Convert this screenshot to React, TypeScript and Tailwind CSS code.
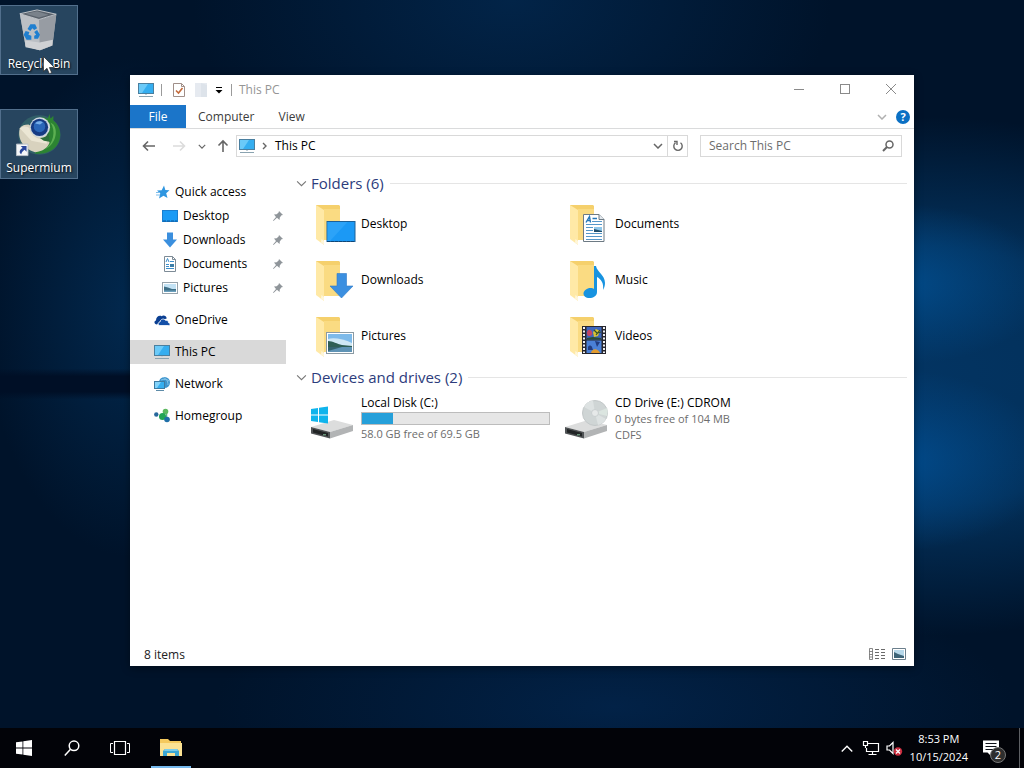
import { useState } from "react";
import type { ReactNode } from "react";

type IconProps = { className?: string };

function PcIcon({ className = "size-4" }: IconProps) {
  return (
    <svg viewBox="0 0 16 16" className={className} aria-hidden="true">
      <rect x="0.5" y="1.5" width="15" height="10" fill="#35aef0" stroke="#4a7f9f" />
      <path d="M1 2h9L4 11H1z" fill="#6bcaf8" />
      <path d="M7 12h2v1H7z" fill="#c3d2da" />
      <path d="M1 14.5h14" stroke="#8aa3b0" />
    </svg>
  );
}

function StarIcon() {
  return (
    <svg viewBox="0 0 16 16" className="size-4" aria-hidden="true">
      <path d="M10 1.500l1.300 4.500 4.200.2-3.300 3 1.300 4.800L9.500 11.800 5 14.500l1.300-5L3 6.500l4.700-.3z" fill="#2f96e0" />
      <path d="M2 8.500h4M2 11h4" stroke="#7cbdec" />
    </svg>
  );
}

function DesktopIcon() {
  return (
    <svg viewBox="0 0 16 16" className="size-4" aria-hidden="true">
      <rect x="0.500" y="2.500" width="15" height="11" fill="#1b9bf5" stroke="#1a7fd0" />
      <path d="M1 13h14" stroke="#0d5a9c" strokeDasharray="3 1" />
    </svg>
  );
}

function DownloadIcon() {
  return (
    <svg viewBox="0 0 16 16" className="size-4" aria-hidden="true">
      <path d="M5 0.500h6v7h4l-7 8-7-8h4z" fill="#3b8fde" />
    </svg>
  );
}

function DocumentIcon() {
  return (
    <svg viewBox="0 0 16 16" className="size-4" aria-hidden="true">
      <path d="M2.500 0.500h8l3 3v12h-11z" fill="#fff" stroke="#7d8b96" />
      <path d="M10.500 0.500v3h3" fill="none" stroke="#7d8b96" />
      <path d="M4 6l1.500-3.500L7 6M8 5.500h4M4 8.500h3M4 10.500h3M4 12.500h8" fill="none" stroke="#3d8fcb" />
      <path d="M8 8h4v3H8z" fill="#3b7ea8" />
    </svg>
  );
}

function PictureIcon() {
  return (
    <svg viewBox="0 0 16 16" className="size-4" aria-hidden="true">
      <rect x="0.500" y="2.500" width="15" height="11" fill="#fff" stroke="#97a3ab" />
      <path d="M2 4h12v8H2z" fill="#c3e2f4" />
      <path d="M2 6.500l4 1 4 1.500h4v3H2z" fill="#3f6f86" />
      <path d="M2 10.500h12V12H2z" fill="#6ba0bd" />
    </svg>
  );
}

function OneDriveIcon() {
  return (
    <svg viewBox="0 0 16 16" className="size-4" aria-hidden="true">
      <path d="M3 12.500C0 12.500-.4 9 2 8.400 2 5 5 3 7.600 4.200 9.500 2.500 12.600 4 12.700 6.500L8 8z" fill="#0b3f92" />
      <path d="M6 13.500C3.500 13.500 3.600 10 6 10c.3-3 4-4 5.600-1.600 2-.6 3 1 2.900 2.300 2.200.4 1.900 2.800 0 2.800z" fill="#1450a8" stroke="#fff" strokeWidth="0.800" />
    </svg>
  );
}

function NetworkIcon() {
  return (
    <svg viewBox="0 0 16 16" className="size-4" aria-hidden="true">
      <circle cx="10.500" cy="6.500" r="5.500" fill="#3d94cd" />
      <path d="M9 1.500c3 1 5 3 5 7.500M7 4c3-1 6-1 8 1" fill="none" stroke="#85c5ea" />
      <rect x="0.500" y="5.500" width="10" height="7" fill="#35aef0" stroke="#3d7ba2" />
      <path d="M1 6h6l-4 6H1z" fill="#83d3fa" />
      <path d="M2 14.500h8" stroke="#5d8ba8" />
    </svg>
  );
}

function HomegroupIcon() {
  return (
    <svg viewBox="0 0 16 16" className="size-4" aria-hidden="true">
      <path d="M8 8l4-4.500M8 8l5 3.500M12.500 4v7" stroke="#5fae86" strokeWidth="1.500" />
      <circle cx="2.300" cy="6.500" r="2.200" fill="#28679c" />
      <circle cx="11.500" cy="3.500" r="2.800" fill="#5cb85f" />
      <circle cx="8.500" cy="8.500" r="3.500" fill="#23a455" />
      <circle cx="13" cy="11.500" r="2.800" fill="#1f6fa8" />
    </svg>
  );
}

function PinIcon() {
  return (
    <svg viewBox="0 0 12 12" className="size-3" aria-hidden="true">
      <path d="M7 1l4 4-1.500.3L7.800 7.400 7.500 10 5 7.800 1.500 11 1 10.500 4 7 2 4.600l2.700-.3L6.600 2.500z" fill="#8f959a" />
    </svg>
  );
}

function FolderBase({ children }: { children: ReactNode }) {
  return (
    <svg viewBox="-4 0 48 48" className="size-12 shrink-0" aria-hidden="true">
      <path d="M4 5h23l1 1v34H11L4 38z" fill="#f5d06c" />
      <path d="M12 9h16v31H12z" fill="#fadb82" />
      <path d="M4 5l8 5v35l-8-6z" fill="#ffe9a6" />
      <path d="M9.500 39l2.500 2v4l-3-2.500z" fill="#fff6da" />
      {children}
    </svg>
  );
}

function FolderDesktop() {
  return (
    <FolderBase>
      <rect x="15" y="21.500" width="28" height="20" fill="#1b99f5" stroke="#1d6097" />
      <path d="M15.500 22h20L18 41h-2.500z" fill="#2ca3f8" />
      <path d="M15 41.500h28" stroke="#0e4677" strokeDasharray="3 1" />
    </FolderBase>
  );
}

function FolderDownloads() {
  return (
    <FolderBase>
      <path d="M25 17.500h9.500V30H41L29.500 42 18 30h7z" fill="#3b8fe0" stroke="#2f7ac8" strokeWidth="0.600" />
    </FolderBase>
  );
}

function FolderPictures() {
  return (
    <FolderBase>
      <rect x="14.500" y="20.500" width="27" height="21" fill="#fff" stroke="#8b9aa3" />
      <path d="M16 22h24v18H16z" fill="#7dbaea" />
      <path d="M16 27c5-2 16 0 24 4v3H16z" fill="#cfe7f5" />
      <path d="M16 29c5 0 9 3 14 4l10 1v1H16z" fill="#2f5e55" />
      <path d="M16 35h24v5H16z" fill="#5f93b5" />
      <path d="M16 35h14l-14 4z" fill="#35626e" />
    </FolderBase>
  );
}

function FolderDocuments() {
  return (
    <FolderBase>
      <path d="M17.500 14.500H33l5 5V41.500H17.500z" fill="#fff" stroke="#6d7a84" />
      <path d="M33 14.500v5h5" fill="#e3e9ee" stroke="#6d7a84" />
      <path d="M20 22.500l3.500-6 1 6M21 20.500h3M26.500 18.500H31" fill="none" stroke="#2577b9" strokeWidth="1.400" />
      <path d="M26 21.500h10M20 24.500h16M20 27.500h7M20 30.500h7M20 33.500h16M20 36.500h16M20 39.500h16" stroke="#5597c9" />
      <path d="M28 27h8v5h-8z" fill="#8fc7ea" />
      <path d="M28 29l4 1 4 1v1h-8z" fill="#1f4d6b" />
    </FolderBase>
  );
}

function FolderMusic() {
  return (
    <FolderBase>
      <path d="M28 10h2c1 6 9 9 9 17 0 3-1 5-2 7 1-7-2-11-6-13v15c0 4-4 6-7.500 6-3.800 0-6-2-6-4.500 0-3 3.500-5.500 7-5.500 1.500 0 2.700.4 3.500 1z" fill="#1793e0" />
    </FolderBase>
  );
}

function FolderVideos() {
  return (
    <FolderBase>
      <path d="M16 14h24v28H16z" fill="#26262e" />
      <path d="M18 15v26M38 15v26" stroke="#f1f1f4" strokeWidth="2" strokeDasharray="2 1.500" />
      <path d="M20.500 15h15v12.500h-15z" fill="#3d66bd" />
      <path d="M20.500 28.500h15V41h-15z" fill="#4a80d6" />
      <path d="M21 20c1-3 4-3 5 0s-1 4-3 4-2-2-2-4z" fill="#c24566" />
      <path d="M27 20l3-3 4 2-2 5-4 1z" fill="#d8c233" />
      <path d="M28 18l3 3 4-1M30 23l4-5" fill="none" stroke="#30502a" strokeWidth="1.200" />
      <path d="M21 26l6-1 8 1v1.500H21z" fill="#294d35" />
      <path d="M22 35c1-2 3-2 4 0l1 3h-5zM29 29l5 1-3 5z" fill="#223c80" />
      <path d="M25 41c1-5 7-5 9 0z" fill="#e29b30" />
    </FolderBase>
  );
}

function DriveBody() {
  return (
    <>
      <path d="M-1 32l23-7 19 5-23 7z" fill="#dcdddd" />
      <path d="M18 37l23-7v6l-23 7.500z" fill="#b2b4b5" />
      <path d="M-1 32l19 5v6.500L-1 38.500z" fill="#505355" />
      <path d="M1 34l15 4v3.500L1 37.500z" fill="#212425" />
      <path d="M11 39.800h3" stroke="#86c29a" />
    </>
  );
}

function LocalDiskIcon() {
  return (
    <svg viewBox="-4 0 48 48" className="size-12 shrink-0" aria-hidden="true">
      <DriveBody />
      <path d="M-1 14l7-1v6.500h-7zM7 12.800l9-1.300v8H7zM-1 20.500h7V27l-7-1zM7 20.500h9v8l-9-1.300z" fill="#10b4ec" />
    </svg>
  );
}

function CdDriveIcon() {
  return (
    <svg viewBox="-4 0 48 48" className="size-12 shrink-0" aria-hidden="true">
      <DriveBody />
      <circle cx="29" cy="18" r="12.500" fill="#cfd5d5" stroke="#c3c8c9" />
      <path d="M29 18L18 12a12.500 12.500 0 0 1 9-6.400zM29 18l11 6a12.500 12.500 0 0 1-8 6z" fill="#dde2e2" />
      <path d="M29 18L41 13a12.500 12.500 0 0 1 0 8z" fill="#dbe5e0" />
      <circle cx="29" cy="18" r="3.500" fill="#e6e9e9" stroke="#c9cfd0" />
    </svg>
  );
}

function RecycleBinIcon() {
  return (
    <svg viewBox="0 0 48 48" className="size-12" aria-hidden="true">
      <path d="M4 6l6 34 15 4 13-5 4-32-18 6z" fill="#a9aeb4" />
      <path d="M4 6l20 6 1 32-15-4z" fill="#bbbfc4" />
      <path d="M24 12l18-5-4 32-13 5z" fill="#979ca3" />
      <path d="M9.500 34l15 2 14-3-.8 6L25 44l-15-3z" fill="#cfd1d4" />
      <path d="M4 6l18-4 20 4.500L24 12z" fill="#59616b" stroke="#c3c7cb" />
      <path d="M10 6l12-2.500L34 7l-10 3z" fill="#7a828b" />
      <path d="M12 22l3-5h5l2 4-3 2-2-2-2 3zM22 23l3 5-2 4h-4v-3l2-1-2-3zM16 33h-5l-3-5 2-4 4 1-1 3 3 1z" fill="#1f7fd0" />
    </svg>
  );
}

function SupermiumIcon() {
  return (
    <svg viewBox="0 0 48 48" className="size-12" aria-hidden="true">
      <ellipse cx="24.500" cy="24" rx="22" ry="20.500" fill="#315f68" />
      <path d="M27 5l6 2 2-5 1 5 3-3v5c11 8 9 26-4 32-6 3-12 3-16 2 11-6 15-15 13-24z" fill="#2c8432" />
      <path d="M36 11c6 9 3 22-6 28 10-4 15-18 9-26z" fill="#5db052" />
      <path d="M4 17c-3 11 4 22 16 25 8-1 13-5 15-10l-3-8L13 13c-4 0-7 1-9 4z" fill="#d8d2be" />
      <path d="M4 17c4-3 8-2 10 0 1 5 4 9 10 11l9 1-1 4-16-3z" fill="#ebe6d4" />
      <path d="M34 20c-1 5-4 7-9 7l4 3 6 1z" fill="#2c6f39" />
      <circle cx="25" cy="16" r="10.500" fill="#cfd8df" />
      <circle cx="24.500" cy="16" r="9" fill="#173b83" />
      <circle cx="24.500" cy="15" r="6" fill="#2a66b8" />
      <path d="M20 12c2-3 6-3 8-1l-3 2z" fill="#77aee8" />
      <path d="M0.500 33.500h12v12h-12z" fill="#f4f6f8" stroke="#b8c0c8" />
      <path d="M5 35.500h6v6l-2-2C7 41 6 42 5.500 44 2.500 42 4 39 7 37.500z" fill="#28459b" />
    </svg>
  );
}

const chevronDown = "M1 1l4 4 4-4";

function Chevron({ className = "", d = chevronDown }: IconProps & { d?: string }) {
  return (
    <svg viewBox="0 0 10 6" className={className} fill="none" stroke="currentColor" aria-hidden="true">
      <path d={d} />
    </svg>
  );
}

const NAV_ITEMS = [
  { label: "Quick access", icon: <StarIcon /> },
  { label: "Desktop", icon: <DesktopIcon />, pinned: true },
  { label: "Downloads", icon: <DownloadIcon />, pinned: true },
  { label: "Documents", icon: <DocumentIcon />, pinned: true },
  { label: "Pictures", icon: <PictureIcon />, pinned: true },
  { label: "OneDrive", icon: <OneDriveIcon />, root: true },
  { label: "This PC", icon: <PcIcon />, root: true },
  { label: "Network", icon: <NetworkIcon />, root: true },
  { label: "Homegroup", icon: <HomegroupIcon />, root: true },
];

const FOLDERS = [
  { label: "Desktop", icon: <FolderDesktop /> },
  { label: "Documents", icon: <FolderDocuments /> },
  { label: "Downloads", icon: <FolderDownloads /> },
  { label: "Music", icon: <FolderMusic /> },
  { label: "Pictures", icon: <FolderPictures /> },
  { label: "Videos", icon: <FolderVideos /> },
];

const DISK = { totalGb: 69.5, freeGb: 58 };

function TitleBar() {
  return (
    <header className="flex h-[30px] items-center pl-2">
      <PcIcon className="size-4" />
      <span className="ml-[7px] h-3 w-px bg-[#9a9a9a]" />
      <button type="button" aria-label="Properties" className="ml-[10px]">
        <svg viewBox="0 0 14 16" className="h-4 w-[14px]" aria-hidden="true">
          <path d="M1.500 1.500h8l3 3v10h-11z" fill="#fff" stroke="#a08f89" />
          <path d="M9.500 1.500v3h3" fill="none" stroke="#a08f89" />
          <path d="M4 8.500l2.500 2.500L10.500 6" fill="none" stroke="#c46a3a" strokeWidth="1.600" />
        </svg>
      </button>
      <button type="button" aria-label="New folder" className="ml-2">
        <svg viewBox="0 0 14 16" className="h-4 w-[14px]" aria-hidden="true">
          <path d="M1 1h12v14H1z" fill="#e6eaf0" />
          <path d="M7 1l6 2v12H7z" fill="#dde3ea" />
        </svg>
      </button>
      <button type="button" aria-label="Customize Quick Access Toolbar" className="ml-[7px]">
        <svg viewBox="0 0 8 8" className="size-2" aria-hidden="true">
          <path d="M1 1.500h6" stroke="#000" />
          <path d="M0.500 4h7L4 7.500z" fill="#000" />
        </svg>
      </button>
      <span className="ml-2 h-3 w-px bg-[#9a9a9a]" />
      <h1 className="ml-[7px] text-[#959595]">This PC</h1>
      <div className="ml-auto flex h-full pb-[2px] text-[#8a8a8a]">
        <button type="button" aria-label="Minimize" className="grid w-[46px] place-items-center">
          <span className="h-px w-[10px] bg-current" />
        </button>
        <button type="button" aria-label="Maximize" className="grid w-[46px] place-items-center">
          <span className="size-[10px] border border-current" />
        </button>
        <button type="button" aria-label="Close" className="grid w-[46px] place-items-center">
          <svg viewBox="0 0 10 10" className="size-[10px]" stroke="currentColor" aria-hidden="true">
            <path d="M0 0l10 10M10 0L0 10" />
          </svg>
        </button>
      </div>
    </header>
  );
}

function Ribbon() {
  return (
    <div className="flex h-6 border-b border-[#dadbdc] text-[#3c3c3c]">
      <button type="button" className="w-14 bg-[#1b75c9] text-white">
        File
      </button>
      <button type="button" className="px-3">
        Computer
      </button>
      <button type="button" className="px-3">
        View
      </button>
      <button type="button" aria-label="Expand the Ribbon" className="ml-auto px-[9px]">
        <Chevron className="h-[6px] w-[10px] stroke-[1.5] text-[#b0b0b0]" />
      </button>
      <button type="button" aria-label="Help" className="mr-1 self-center">
        <span className="grid size-[14px] place-items-center rounded-full bg-[#0b70c4] text-[11px] leading-[14px] font-bold text-white">
          ?
        </span>
      </button>
    </div>
  );
}

function AddressBar() {
  return (
    <div className="flex h-[34px] items-center px-3 text-[#666]">
      <button type="button" aria-label="Back">
        <svg viewBox="0 0 14 12" className="h-3 w-[14px]" fill="none" stroke="currentColor" strokeWidth="1.600" aria-hidden="true">
          <path d="M13 6H1.500M6 1.500L1.500 6 6 10.500" />
        </svg>
      </button>
      <button type="button" aria-label="Forward" className="ml-4 text-[#dcdcdc]">
        <svg viewBox="0 0 14 12" className="h-3 w-[14px]" fill="none" stroke="currentColor" strokeWidth="1.600" aria-hidden="true">
          <path d="M1 6h11.500M8 1.500L12.500 6 8 10.500" />
        </svg>
      </button>
      <button type="button" aria-label="Recent locations" className="ml-3">
        <Chevron className="h-[5px] w-2 stroke-[1.5]" />
      </button>
      <button type="button" aria-label="Up" className="mr-[7px] ml-[11px]">
        <svg viewBox="0 0 12 14" className="h-[14px] w-3" fill="none" stroke="currentColor" strokeWidth="1.600" aria-hidden="true">
          <path d="M6 13V2M1.500 6.500L6 2l4.500 4.500" />
        </svg>
      </button>
      <div className="flex h-[22px] min-w-0 flex-1 items-center border border-[#d9d9d9] pl-[2px]">
        <PcIcon className="size-4" />
        <svg viewBox="0 0 6 8" className="mx-[7px] h-2 w-[6px]" fill="none" stroke="currentColor" strokeWidth="1.400" aria-hidden="true">
          <path d="M1 1l3 3-3 3" />
        </svg>
        <a href="#this-pc" className="text-black">
          This PC
        </a>
        <button type="button" aria-label="Previous locations" className="ml-auto px-1">
          <Chevron className="h-[6px] w-[10px] stroke-[1.5]" />
        </button>
        <button
          type="button"
          aria-label="Refresh"
          className="grid h-full w-5 place-items-center border-l border-[#d9d9d9]"
        >
          <svg viewBox="0 0 12 12" className="size-3" fill="none" stroke="currentColor" strokeWidth="1.400" aria-hidden="true">
            <path d="M3.500 2.800A4.200 4.200 0 1 0 8.500 2.800M2 1.500h3v3.500" />
          </svg>
        </button>
      </div>
      <label className="ml-3 flex h-[22px] w-[202px] items-center border border-[#d9d9d9] px-[7px]">
        <input
          type="search"
          aria-label="Search This PC"
          placeholder="Search This PC"
          className="min-w-0 flex-1 pl-px outline-none placeholder:text-[#6d6d6d]"
        />
        <svg viewBox="0 0 12 12" className="size-3" fill="none" stroke="currentColor" strokeWidth="1.500" aria-hidden="true">
          <circle cx="7.500" cy="4.500" r="3.500" />
          <path d="M5 7L1 11" strokeWidth="2" />
        </svg>
      </label>
    </div>
  );
}

function NavPane({ current, onSelect }: { current: string; onSelect: (label: string) => void }) {
  return (
    <nav aria-label="Navigation pane" className="w-[156px] shrink-0 pt-[17px]">
      <ul>
        {NAV_ITEMS.map((item) => (
          <li key={item.label} className={item.root ? "mt-2" : ""}>
            <button
              type="button"
              onClick={() => onSelect(item.label)}
              className={`flex h-6 w-full items-center gap-[5px] pr-[2px] ${item.pinned ? "pl-8" : "pl-6"} ${
                current === item.label ? "bg-[#d9d9d9]" : ""
              }`}
            >
              {item.icon}
              <span className="flex-1 text-left">{item.label}</span>
              {item.pinned ? <PinIcon /> : null}
            </button>
          </li>
        ))}
      </ul>
    </nav>
  );
}

function Group({ title, children }: { title: string; children: ReactNode }) {
  return (
    <section>
      <h2 className="flex h-[26px] items-center text-[15px] text-[#2c3c7c]">
        <button type="button" className="flex items-center gap-1">
          <Chevron className="h-[7px] w-[11px] text-[#777]" />
          {title}
        </button>
        <span className="ml-[6px] h-px flex-1 bg-[#e5e5e5]" />
      </h2>
      <ul className="grid grid-cols-[repeat(auto-fill,254px)] pl-3">{children}</ul>
    </section>
  );
}

function FileView() {
  const used = ((DISK.totalGb - DISK.freeGb) / DISK.totalGb) * 100;

  return (
    <main className="ml-[10px] min-w-0 flex-1 pt-[7px] pr-[7px]">
      <Group title="Folders (6)">
        {FOLDERS.map((folder) => (
          <li key={folder.label} className="flex h-14 items-center gap-[5px]">
            {folder.icon}
            <span>{folder.label}</span>
          </li>
        ))}
      </Group>
      <Group title="Devices and drives (2)">
        <li className="flex items-start gap-[5px] py-[5px]">
          <LocalDiskIcon />
          <div className="min-w-0 flex-1 pr-3">
            <p>Local Disk (C:)</p>
            <div
              role="progressbar"
              aria-label="Used space"
              aria-valuenow={Math.round(used)}
              className="mt-px h-[13px] border border-[#bcbcbc] bg-[#e6e6e6]"
            >
              <div className="h-full bg-[#26a0da]" style={{ width: `${used}%` }} />
            </div>
            <p className="mt-px text-[11px] text-[#6d6d6d]">58.0 GB free of 69.5 GB</p>
          </div>
        </li>
        <li className="flex items-start gap-[5px] py-[5px]">
          <CdDriveIcon />
          <div className="whitespace-nowrap">
            <p>CD Drive (E:) CDROM</p>
            <p className="text-[11px] text-[#6d6d6d]">0 bytes free of 104 MB</p>
            <p className="text-[11px] text-[#6d6d6d]">CDFS</p>
          </div>
        </li>
      </Group>
    </main>
  );
}

function StatusBar() {
  return (
    <footer className="flex h-6 items-center gap-[5px] pr-[7px] pl-[14px] text-[#222]">
      <span className="mr-auto pt-px">8 items</span>
      <button type="button" aria-label="Details view">
        <svg viewBox="0 0 18 14" className="h-[14px] w-[18px]" fill="none" stroke="#6b6b6b" aria-hidden="true">
          <path d="M1.500 1.500h3v11h-3zM1.500 4.500h3M1.500 7.500h3M1.500 10h3" strokeWidth="0.800" />
          <path d="M7 2.500h4M13 2.500h4M7 5.500h4M13 5.500h4M7 8.500h4M13 8.500h4M7 11.500h4M13 11.500h4" />
        </svg>
      </button>
      <button type="button" aria-label="Large icons view">
        <svg viewBox="0 0 16 14" className="h-[14px] w-4" aria-hidden="true">
          <path d="M1.500 1.500h13v11h-13z" fill="#fff" stroke="#6b7f8c" />
          <path d="M3 3h10v8H3z" fill="#b6d8ea" />
          <path d="M3 5l4 2 6 2v2H3z" fill="#3d6478" />
        </svg>
      </button>
    </footer>
  );
}

function DesktopShortcut({ label, icon }: { label: string; icon: ReactNode }) {
  return (
    <button
      type="button"
      className="flex h-[70px] w-[78px] flex-col items-center border border-[#526f8c] bg-[#27455f] pt-[2px] text-white"
    >
      {icon}
      <span className="leading-5 [text-shadow:1px_1px_2px_#000]">{label}</span>
    </button>
  );
}

function Taskbar() {
  return (
    <footer className="flex h-10 shrink-0 items-stretch bg-[#020308] text-white">
      <button type="button" aria-label="Start" className="grid w-12 place-items-center">
        <svg viewBox="0 0 16 16" className="size-4" fill="#fff" aria-hidden="true">
          <path d="M0 2.300l6.500-.9v6.200H0zM7.300 1.300L16 0v7.600H7.300zM0 8.400h6.500v6.200L0 13.700zM7.300 8.400H16V16l-8.700-1.300z" />
        </svg>
      </button>
      <button type="button" aria-label="Search" className="grid w-12 place-items-center">
        <svg viewBox="0 0 16 16" className="size-4" fill="none" stroke="#fff" strokeWidth="1.500" aria-hidden="true">
          <circle cx="10" cy="5.800" r="4.800" />
          <path d="M6.500 9.300L0.800 15.500" />
        </svg>
      </button>
      <button type="button" aria-label="Task View" className="grid w-12 place-items-center">
        <svg viewBox="0 0 20 16" className="h-4 w-5" fill="none" stroke="#fff" aria-hidden="true">
          <path d="M4.500 1.500h11v13h-11z" strokeWidth="1.200" />
          <path d="M3 3.500H0.500v9H3M17 3.500h2.500v9H17" />
        </svg>
      </button>
      <button
        type="button"
        aria-label="File Explorer"
        className="ml-[7px] grid w-10 place-items-center border-b-2 border-[#76b9ed] pt-[2px]"
      >
        <svg viewBox="0 0 22 18" className="h-[18px] w-[22px]" aria-hidden="true">
          <path d="M0 0h8l2 2h11v15H0z" fill="#f4c95d" />
          <path d="M0 4h22v13H0z" fill="#fbe293" />
          <path d="M3 17v-5l2-2h12l2 2v5h-4v-3H7v3z" fill="#3ba7d4" />
          <path d="M5 10h12l1 2H4z" fill="#7accea" />
        </svg>
      </button>
      <div className="ml-auto flex items-center">
        <button type="button" aria-label="Show hidden icons">
          <Chevron className="h-[7px] w-3 stroke-[1.2]" d="M0.500 5.500L5 1l4.500 4.500" />
        </button>
        <button type="button" aria-label="Network" className="ml-[9px]">
          <svg viewBox="0 0 18 16" className="h-4 w-[18px]" fill="none" stroke="#fff" strokeWidth="1.200" aria-hidden="true">
            <path d="M6 3.500h10.500v8H4.500V8M10.500 11.500v3M6.500 14.500h8" />
            <path d="M1.500 1.500h4v4h-4zM3.500 5.500v2.500" />
          </svg>
        </button>
        <button type="button" aria-label="Volume muted" className="ml-[6px]">
          <svg viewBox="0 0 17 16" className="h-4 w-[17px]" fill="none" aria-hidden="true">
            <path d="M1 6h2.500L7 2.500v11L3.500 10H1z" stroke="#fff" strokeWidth="1.200" />
            <circle cx="12" cy="11.500" r="4.200" fill="#cb2c3e" />
            <path d="M10 9.500l4 4M14 9.500l-4 4" stroke="#fff" strokeWidth="1.300" />
          </svg>
        </button>
        <time dateTime="2024-10-15T20:53" className="ml-[7px] text-center text-[11px] leading-[18px]">
          8:53 PM
          <br />
          10/15/2024
        </time>
        <button type="button" aria-label="Notifications, 2 new" className="relative mr-[14px] ml-[15px]">
          <svg viewBox="0 0 16 17" className="h-[17px] w-4" aria-hidden="true">
            <path d="M0 0.500h16v12H8.500v4l-4-4H0z" fill="#fff" />
            <path d="M2.500 3.500h11M2.500 6.500h11M2.500 9.500h8" stroke="#10131a" />
          </svg>
          <span className="absolute top-[7px] left-[7px] grid size-4 place-items-center rounded-full border border-[#777] bg-[#2e2e2e] text-[11px] leading-3">
            2
          </span>
        </button>
      </div>
      <span className="mr-1 ml-[6px] w-px bg-[#5d5f63]" />
    </footer>
  );
}

export default function App() {
  const [current, setCurrent] = useState("This PC");

  return (
    <div className="flex h-screen flex-col overflow-hidden bg-[#00132a] bg-[radial-gradient(ellipse_150px_80px_at_88%_37%,#024a88_0%,transparent_100%),radial-gradient(ellipse_150px_90px_at_88%_60%,#024a8a_0%,transparent_100%),radial-gradient(ellipse_420px_260px_at_90%_49%,#033462_0%,#03305a_50%,transparent_100%),radial-gradient(ellipse_320px_200px_at_50%_0%,#022448_0%,transparent_100%),radial-gradient(ellipse_400px_130px_at_60%_92%,#022247_0%,transparent_100%),linear-gradient(to_bottom,transparent_48%,#000f26_49%,#000f26_51%,transparent_52%),radial-gradient(ellipse_150px_250px_at_13%_40%,#02294f_0%,transparent_100%)] font-['Open_Sans','Noto_Sans',sans-serif] text-[12px] leading-4 text-black">
      <div className="flex min-h-0 flex-1">
        <div className="relative flex w-[130px] shrink-0 flex-col gap-[34px] pt-[5px]">
          <DesktopShortcut label="Recycle Bin" icon={<RecycleBinIcon />} />
          <DesktopShortcut label="Supermium" icon={<SupermiumIcon />} />
          <svg viewBox="0 0 12 19" className="absolute top-[56px] left-[43px] h-[19px] w-3" aria-hidden="true">
            <path d="M0.500 0.500v15l3.500-3.200 2.300 5.400 2.400-1-2.300-5.200h5z" fill="#fff" stroke="#222" strokeWidth="0.700" />
          </svg>
        </div>
        <div className="mt-[75px] mr-[110px] mb-[62px] flex min-w-0 flex-1 flex-col bg-white shadow-[0_2px_8px_rgba(0,0,0,0.4)]">
          <TitleBar />
          <Ribbon />
          <AddressBar />
          <div className="flex min-h-0 flex-1 overflow-hidden">
            <NavPane current={current} onSelect={setCurrent} />
            <FileView />
          </div>
          <StatusBar />
        </div>
      </div>
      <Taskbar />
    </div>
  );
}
